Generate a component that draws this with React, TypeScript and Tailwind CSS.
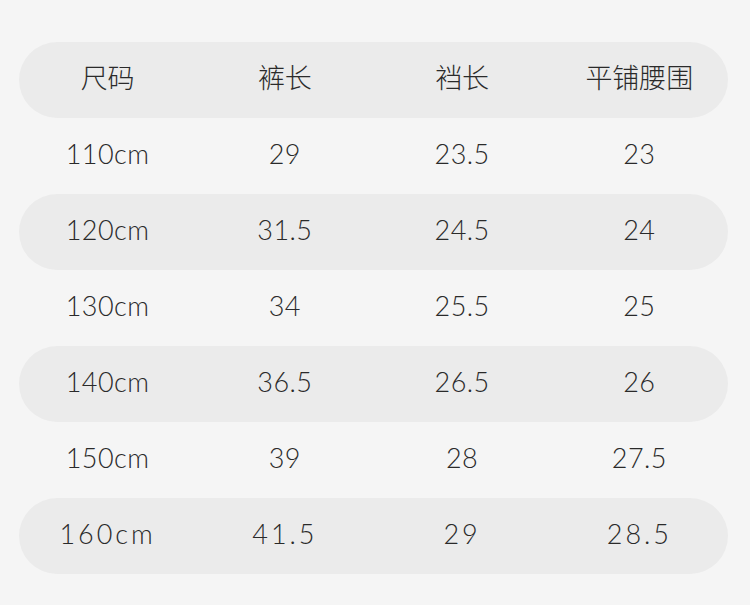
import React from "react";

const header = ["尺码", "裤长", "裆长", "平铺腰围"];
const rows: { cells: string[]; wide?: boolean }[] = [
  { cells: ["110cm", "29", "23.5", "23"] },
  { cells: ["120cm", "31.5", "24.5", "24"] },
  { cells: ["130cm", "34", "25.5", "25"] },
  { cells: ["140cm", "36.5", "26.5", "26"] },
  { cells: ["150cm", "39", "28", "27.5"] },
  { cells: ["160cm", "41.5", "29", "28.5"], wide: true },
];

export default function App() {
  return (
    <div
      className="w-[750px] h-[605px] bg-[#f5f5f5] pt-[42px] pl-[19px] pr-[22px] text-[#2a2a2a] font-light"
      style={{ fontFamily: "Lato, 'Noto Sans CJK SC', sans-serif" }}
    >
      <div className="grid grid-cols-4 h-[76px] items-center rounded-full bg-[#ebebeb] text-[27px]">
        {header.map((h) => (
          <div key={h} className="text-center pb-[4px]">{h}</div>
        ))}
      </div>
      {rows.map((r, i) => (
        <div
          key={i}
          className={`grid grid-cols-4 h-[76px] items-center rounded-full text-[27px] ${
            i % 2 === 1 ? "bg-[#ebebeb]" : ""
          } ${r.wide ? "tracking-[3px]" : "tracking-[0.5px]"}`}
        >
          {r.cells.map((c, j) => (
            <div key={j} className="text-center pb-[3px]">{c}</div>
          ))}
        </div>
      ))}
    </div>
  );
}
